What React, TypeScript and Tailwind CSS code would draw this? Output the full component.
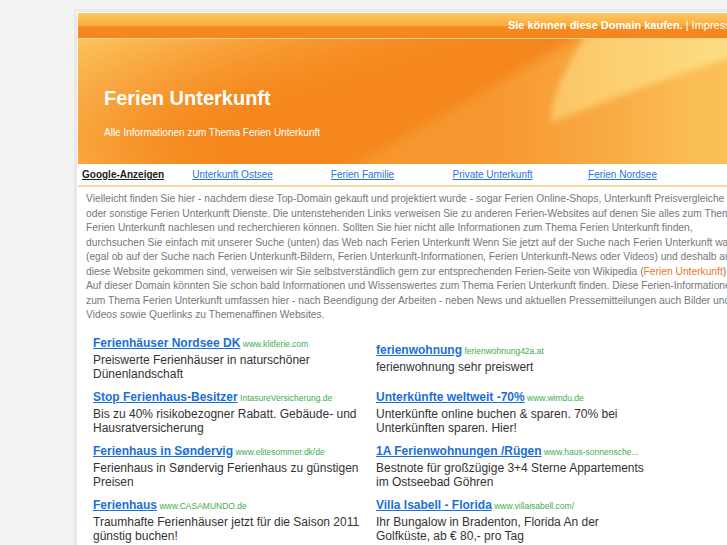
import React from "react";

const ads = [
  [
    { title: "Ferienhäuser Nordsee DK", url: "www.klitferie.com", desc: "Preiswerte Ferienhäuser in naturschöner Dünenlandschaft" },
    { title: "ferienwohnung", url: "ferienwohnung42a.at", desc: "ferienwohnung sehr preiswert" },
  ],
  [
    { title: "Stop Ferienhaus-Besitzer", url: "IntasureVersicherung.de", desc: "Bis zu 40% risikobezogner Rabatt. Gebäude- und Hausratversicherung" },
    { title: "Unterkünfte weltweit -70%", url: "www.wimdu.de", desc: "Unterkünfte online buchen & sparen. 70% bei Unterkünften sparen. Hier!" },
  ],
  [
    { title: "Ferienhaus in Søndervig", url: "www.elitesommer.dk/de", desc: "Ferienhaus in Søndervig Ferienhaus zu günstigen Preisen" },
    { title: "1A Ferienwohnungen /Rügen", url: "www.haus-sonnensche...", desc: "Bestnote für großzügige 3+4 Sterne Appartements im Ostseebad Göhren" },
  ],
  [
    { title: "Ferienhaus", url: "www.CASAMUNDO.de", desc: "Traumhafte Ferienhäuser jetzt für die Saison 2011 günstig buchen!" },
    { title: "Villa Isabell - Florida", url: "www.villaisabell.com/", desc: "Ihr Bungalow in Bradenton, Florida An der Golfküste, ab € 80,- pro Tag" },
  ],
];

function Ad({ a }: { a: { title: string; url: string; desc: string } }) {
  return (
    <div className="flex flex-col justify-center h-[54px] w-[275px]">
      <div className="leading-[17px] whitespace-nowrap">
        <a href="#" className="text-[12px] font-bold text-[#1b6fd8] underline">{a.title}</a>
        <span className="text-[8.5px] text-[#3fae4e]"> {a.url}</span>
      </div>
      <div className="text-[12px] leading-[14px] text-[#333]">{a.desc}</div>
    </div>
  );
}

function BannerArt() {
  return (
    <svg className="absolute inset-0" width="100%" height="100%" viewBox="0 0 680 125" preserveAspectRatio="none">
      <defs>
        <linearGradient id="lg1" x1="0" y1="0" x2="1" y2="0">
          <stop offset="0" stopColor="#f9ac44" />
          <stop offset="0.25" stopColor="#f5861c" stopOpacity="0" />
        </linearGradient>
        <linearGradient id="lg2" x1="0" y1="0" x2="1" y2="0.6">
          <stop offset="0" stopColor="#fcc35c" />
          <stop offset="0.3" stopColor="#f7a037" stopOpacity="0.5" />
          <stop offset="0.5" stopColor="#f5861c" stopOpacity="0" />
        </linearGradient>
        <linearGradient id="rg" x1="0" y1="0" x2="1" y2="0">
          <stop offset="0.35" stopColor="#f9a843" stopOpacity="0.5" />
          <stop offset="0.8" stopColor="#fbbd55" />
          <stop offset="1" stopColor="#fcc45b" />
        </linearGradient>
        <linearGradient id="yg" x1="0" y1="0" x2="1" y2="0">
          <stop offset="0" stopColor="#fcd275" stopOpacity="0.7" />
          <stop offset="0.4" stopColor="#fcd275" />
          <stop offset="1" stopColor="#fee58c" />
        </linearGradient>
        <filter id="bl" x="-20%" y="-20%" width="140%" height="140%">
          <feGaussianBlur stdDeviation="6" />
        </filter>
        <filter id="bl2" x="-20%" y="-20%" width="140%" height="140%">
          <feGaussianBlur stdDeviation="3" />
        </filter>
      </defs>
      <rect width="680" height="125" fill="#f5861c" />
      <rect width="680" height="125" fill="url(#lg1)" />
      <rect width="680" height="125" fill="url(#lg2)" />
      <path d="M512 -10 L700 -10 L700 140 L250 140 Z" fill="url(#rg)" filter="url(#bl)" />
      <path d="M506 -5 L700 -5 L700 8 C645 16 585 40 525 62 C505 70 485 78 470 84 C470 60 480 35 506 -5 Z" fill="url(#yg)" filter="url(#bl2)" />
    </svg>
  );
}

export default function App() {
  return (
    <div className="h-screen w-full overflow-hidden bg-[#f3f3f3] font-['Liberation_Sans',Arial,sans-serif]">
      <div className="pt-[9px] pl-[74px]">
        <div className="w-[688px] bg-[#e9e9e9] pl-[3px] pt-[3px]">
          <div className="bg-white pl-px pt-px">
            {/* top bar */}
            <div className="h-[25px] flex items-center justify-end pr-[16px] bg-[linear-gradient(#fec862,#f9ab3e_50%,#f4891e_56%,#f3871e)] text-[11px] text-white whitespace-nowrap">
              <span className="font-bold">Sie können diese Domain kaufen.</span>
              <span className="px-[3px]">|</span>
              <span>Impressum</span>
            </div>
            <div className="h-px bg-[#fccb98]" />
            {/* banner */}
            <div className="relative h-[125px] overflow-hidden">
              <BannerArt />
              <div className="relative pl-[26px] pt-[49px] text-white">
                <div className="text-[20px] leading-[20px] font-bold">Ferien Unterkunft</div>
                <div className="mt-[18px] text-[10px] leading-[13px]">Alle Informationen zum Thema Ferien Unterkunft</div>
              </div>
            </div>
            {/* nav */}
            <div className="h-[23px] flex items-center border-b-2 border-[#fdd69d] text-[10px] whitespace-nowrap">
              <div className="w-[89.5px] pl-1">
                <a href="#" className="font-bold text-[#222] underline">Google-Anzeigen</a>
              </div>
              {["Unterkunft Ostsee", "Ferien Familie", "Private Unterkunft", "Ferien Nordsee"].map((t) => (
                <div key={t} className="w-[130px] text-center">
                  <a href="#" className="text-[#2a74d8] underline">{t}</a>
                </div>
              ))}
            </div>
            {/* paragraph */}
            <p className="pl-2 pt-[5px] w-[668px] text-[10.25px] leading-[14.5px] text-[#777]">
              Vielleicht finden Sie hier - nachdem diese Top-Domain gekauft und projektiert wurde - sogar Ferien Online-Shops, Unterkunft Preisvergleiche oder sonstige Ferien Unterkunft Dienste. Die untenstehenden Links verweisen Sie zu anderen Ferien-Websites auf denen Sie alles zum Thema Ferien Unterkunft nachlesen und recherchieren können. Sollten Sie hier nicht alle Informationen zum Thema Ferien Unterkunft finden, durchsuchen Sie einfach mit unserer Suche (unten) das Web nach Ferien Unterkunft Wenn Sie jetzt auf der Suche nach Ferien Unterkunft waren (egal ob auf der Suche nach Ferien Unterkunft-Bildern, Ferien Unterkunft-Informationen, Ferien Unterkunft-News oder Videos) und deshalb auf diese Website gekommen sind, verweisen wir Sie selbstverständlich gern zur entsprechenden Ferien-Seite von Wikipedia (<a href="#" className="text-[#f5761a]">Ferien Unterkunft</a>). Auf dieser Domain könnten Sie schon bald Informationen und Wissenswertes zum Thema Ferien Unterkunft finden. Diese Ferien-Informationen zum Thema Ferien Unterkunft umfassen hier - nach Beendigung der Arbeiten - neben News und aktuellen Pressemitteilungen auch Bilder und Videos sowie Querlinks zu Themenaffinen Websites.
            </p>
            {/* ads */}
            <div className="pt-[7.5px] pl-[15px] pb-6">
              {ads.map((row, i) => (
                <div key={i} className="grid grid-cols-[283px_283px]">
                  <Ad a={row[0]} />
                  <Ad a={row[1]} />
                </div>
              ))}
            </div>
          </div>
        </div>
      </div>
    </div>
  );
}
